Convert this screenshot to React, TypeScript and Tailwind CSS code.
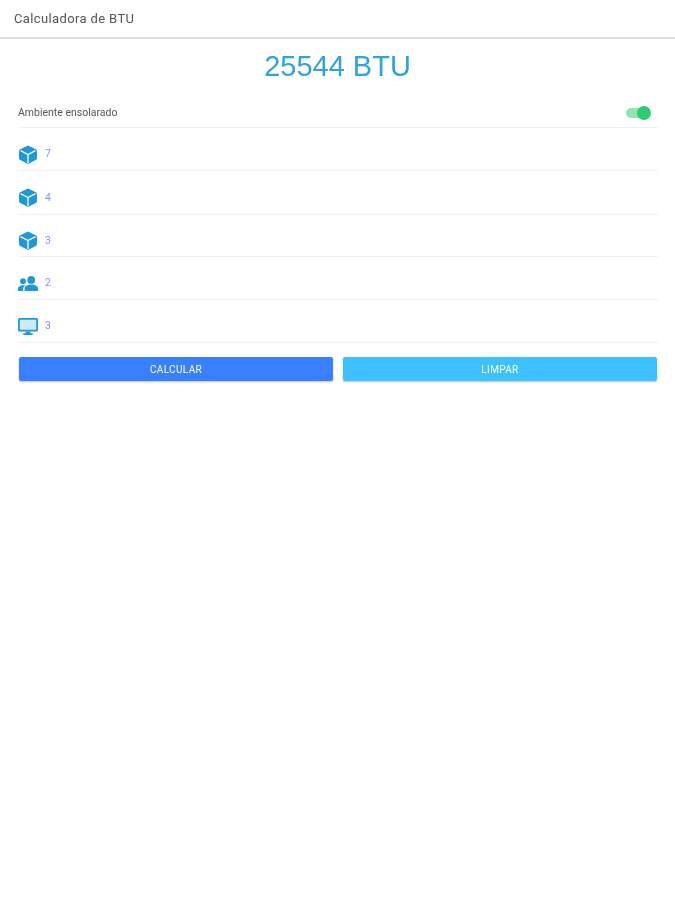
const rows = [
  { icon: 'cube', value: '7', h: 'h-[43px]' },
  { icon: 'cube', value: '4', h: 'h-[44px]' },
  { icon: 'cube', value: '3', h: 'h-[42px]' },
  { icon: 'people', value: '2', h: 'h-[43px]' },
  { icon: 'desktop', value: '3', h: 'h-[43px]' },
];

function RowIcon({ name }: { name: string }) {
  if (name === 'people') {
    return (
      <svg viewBox="0 0 20 15" className="w-[20px] h-[15px] fill-[#2098d8]">
        <circle cx="13.2" cy="3.9" r="3.9" />
        <path d="M6.6 15v-2.6c0-2.8 3.6-3.9 6.6-3.9s6.8 1.1 6.8 3.9V15z" />
        <circle cx="5" cy="5.2" r="2.9" />
        <path d="M0 15v-2.2c0-2.3 2.6-3.6 5.2-3.6.8 0 1.5.1 2 .3-1.3.8-2 1.9-2 3.3V15z" />
      </svg>
    );
  }
  if (name === 'desktop') {
    return (
      <svg viewBox="0 0 20 17" className="w-[20px] h-[17px] fill-[#2098d8]">
        <rect x="1" y="1" width="18" height="11.5" fill="#cfe9f7" />
        <path d="M1.5 0h17A1.5 1.5 0 0 1 20 1.5v10.5a1.5 1.5 0 0 1-1.5 1.5h-17A1.5 1.5 0 0 1 0 12V1.5A1.5 1.5 0 0 1 1.5 0zM1.8 1.8V11.7h16.4V1.8z" fillRule="evenodd" />
        <path d="M7.5 13.5h5v1.7h2.3V17H5.2v-1.8h2.3z" />
      </svg>
    );
  }
  return (
    <svg viewBox="0 0 18 19" className="w-[18px] h-[19px] ml-px">
      <path
        d="M9 0.5L16.8 4.3Q18 5 18 6.2V13Q18 14.3 16.8 15L9 19 1.2 15Q0 14.3 0 13V6.2Q0 5 1.2 4.3z"
        fill="#2098d8"
      />
      <path d="M1.5 5.6L9 9.5l7.5-3.9M9 9.5V18" fill="none" stroke="#ffffff" strokeWidth="1.3" />
    </svg>
  );
}

export default function App() {
  return (
    <div className="w-[675px] h-[900px] bg-white font-['Roboto',sans-serif] overflow-hidden blur-[0.6px]">
      {/* Barra superior */}
      <header className="h-[39px] border-b-2 border-[#dedede] flex items-center px-[14px] bg-white">
        <span className="text-[13px] text-[#555555] tracking-[0.37px]">Calculadora de BTU</span>
      </header>

      <h1 className="h-[54px] flex items-center justify-center text-[29px] leading-none text-[#2fa3dc] font-['Liberation_Sans',sans-serif]">
        25544 BTU
      </h1>

      <div className="pl-[18px] pr-[17px]">
        <div className="h-[35px] pt-[5px] flex items-center justify-between border-b border-[#f1f1f1]">
          <span className="text-[10.5px] text-[#555555]">Ambiente ensolarado</span>
          <div className="relative w-[24px] h-[10px] mr-[8px] rounded-full bg-[#8ee5ad]">
            <div className="absolute -right-px -top-[2px] w-[14px] h-[14px] rounded-full bg-[#2ecc71]" />
          </div>
        </div>

        {rows.map((row, i) => (
          <div key={i} className={`${row.h} pt-[10px] flex items-center border-b border-[#f1f1f1]`}>
            <div className="w-[27px] flex justify-start">
              <RowIcon name={row.icon} />
            </div>
            <span className="text-[10.5px] text-[#8094f6]">{row.value}</span>
          </div>
        ))}

        <div className="flex gap-[10px] mt-[14px] pl-[1px] pr-[1px]">
          <button className="flex-1 h-[24px] rounded-[2px] bg-[#3880ff] text-white text-[10px] tracking-[0.35px] shadow-[0_1px_2px_rgba(0,0,0,0.25)]">
            CALCULAR
          </button>
          <button className="flex-1 h-[24px] rounded-[2px] bg-[#3dc2ff] text-white text-[10px] tracking-[0.35px] shadow-[0_1px_2px_rgba(0,0,0,0.25)]">
            LIMPAR
          </button>
        </div>
      </div>
    </div>
  );
}
